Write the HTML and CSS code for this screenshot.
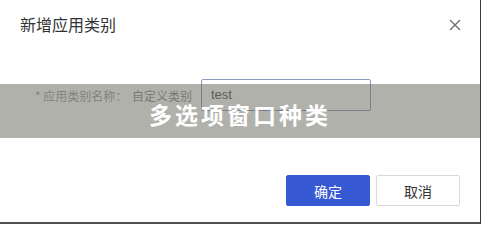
FILE: index.html
```html
<!DOCTYPE html>
<html lang="zh-CN">
<head>
<meta charset="utf-8">
<title>新增应用类别</title>
<link rel="stylesheet" href="styles.css">
</head>
<body>
<div class="dialog">
  <div class="dialog-header">
    <span class="dialog-title">新增应用类别</span>
    <span class="dialog-close" aria-label="关闭">
      <svg width="12" height="12" viewBox="0 0 12 12"><path d="M1 1 L11 11 M11 1 L1 11" stroke="#6f6f6f" stroke-width="1.4" fill="none"/></svg>
    </span>
  </div>
  <div class="dialog-body">
    <div class="form-row">
      <span class="form-label">* 应用类别名称：</span>
      <span class="form-prefix">自定义类别</span>
      <div class="form-input">test</div>
    </div>
  </div>
  <div class="dialog-footer">
    <button class="btn btn-primary">确定</button>
    <button class="btn btn-default">取消</button>
  </div>
  <div class="overlay-band">多选项窗口种类</div>
</div>
</body>
</html>
```
FILE: styles.css
```css
* { box-sizing: border-box; }
html, body { margin: 0; padding: 0; background: #fff; }
body {
  font-family: "Noto Sans CJK SC", "Noto Sans", "Liberation Sans", sans-serif;
  color: #333;
}
.dialog {
  position: relative;
  width: 481px;
  height: 224px;
  display: flex;
  flex-direction: column;
  background: #fff;
  border-right: 1px solid #3a3a3a;
  border-bottom: 2px solid #4e4e4e;
  overflow: hidden;
}
.dialog-header {
  height: 48px;
  display: flex;
  align-items: center;
  justify-content: space-between;
  padding: 0 19px 0 20px;
}
.dialog-title {
  font-size: 16px;
  line-height: 20px;
  color: #333;
  margin-top: -1px;
}
.dialog-close {
  display: flex;
  width: 12px;
  height: 12px;
  margin-top: 1px;
}
.dialog-body {
  padding: 31px 0 0 35px;
}
.form-row {
  display: flex;
  align-items: center;
  height: 32px;
  font-size: 12px;
}
.form-label {
  color: #a2a2a2;
  width: 97px;
}
.form-prefix {
  color: #8f8f8f;
  width: 69px;
}
.form-input {
  width: 170px;
  height: 32px;
  border: 1px solid #8d9bba;
  border-radius: 2px;
  padding: 0 9px;
  font-size: 13px;
  line-height: 30px;
  color: #555;
  font-family: "Liberation Sans", "Noto Sans CJK SC", sans-serif;
}
.dialog-footer {
  margin-top: auto;
  display: flex;
  justify-content: flex-end;
  gap: 6px;
  padding: 0 20px 16px 0;
}
.btn {
  width: 84px;
  height: 31px;
  border-radius: 2px;
  font-family: "Noto Sans CJK SC", sans-serif;
  font-size: 14px;
  padding: 0;
  cursor: pointer;
}
.btn-primary {
  background: #3759d3;
  border: 1px solid #3759d3;
  color: #fff;
}
.btn-default {
  background: #fff;
  border: 1px solid #d9d9d9;
  color: #333;
}
.overlay-band {
  position: absolute;
  left: 0;
  right: 0;
  top: 84px;
  height: 54px;
  background: rgba(99, 99, 87, 0.5);
  color: #fff;
  font-weight: 700;
  font-size: 23px;
  letter-spacing: 3px;
  display: flex;
  align-items: center;
  justify-content: center;
  padding-top: 5px;
}
```
